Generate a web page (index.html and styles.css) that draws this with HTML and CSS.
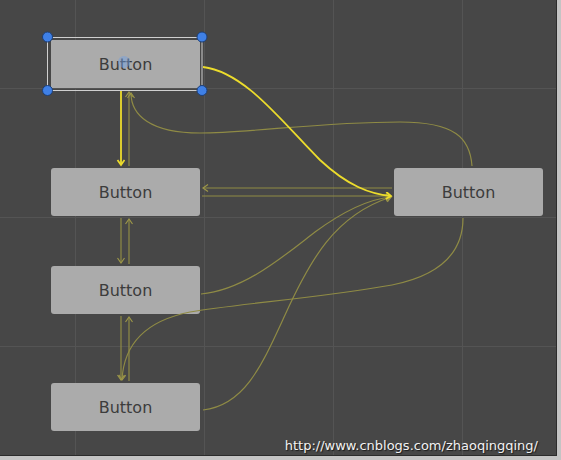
FILE: index.html
```html
<!DOCTYPE html>
<html lang="en">
<head>
  <meta charset="UTF-8" />
  <title>Navigation</title>
  <link rel="stylesheet" href="styles.css">
</head>
<body>
  <div class="shot">
    <div class="canvas">
      <div class="node n1">Button</div>
      <div class="node n2">Button</div>
      <div class="node n3">Button</div>
      <div class="node n4">Button</div>
      <div class="node n5">Button</div>

      <svg class="links" width="556" height="455" viewBox="0 0 556 455">
        <defs>
          <marker id="tipDim" markerUnits="userSpaceOnUse" markerWidth="10" markerHeight="10" refX="6" refY="4" orient="auto">
            <path d="M1,0.5 L6,4 L1,7.5" fill="none" stroke="#9c9648" stroke-width="1.2"/>
          </marker>
          <marker id="tipLit" markerUnits="userSpaceOnUse" markerWidth="10" markerHeight="10" refX="6" refY="4" orient="auto">
            <path d="M1,0.5 L6,4 L1,7.5" fill="none" stroke="#ecdc2c" stroke-width="1.8"/>
          </marker>
        </defs>

        <g class="dim" marker-end="url(#tipDim)">
          <path d="M129,166 L129,92"/>
          <path d="M472,166 C470,138 455,122 400,122 C320,122 250,133 200,133 C150,133 131,115 131,93"/>
          <path d="M392,188 L203,188"/>
          <path d="M202,196 L391,196"/>
          <path d="M201,294 C245,290 285,255 315,232 C345,210 370,199 391,197"/>
          <path d="M203,410 C245,405 262,365 285,315 C310,260 335,215 391,197"/>
          <path d="M463,218 C463,258 432,277 392,285 C320,298 235,304 190,312 C150,320 124,340 122,380"/>
          <path d="M121,218 L121,263"/>
          <path d="M129,264 L129,219"/>
          <path d="M121,316 L121,380"/>
          <path d="M129,381 L129,317"/>
        </g>

        <g class="lit" marker-end="url(#tipLit)">
          <path d="M203,67 C245,72 282,122 320,160 C348,186 370,194 391,196"/>
          <path d="M121,91 L121,165"/>
        </g>

        <rect class="select" x="47.5" y="37.5" width="154.5" height="53"/>
        <circle class="pivot" cx="124" cy="62" r="6"/>
        <circle class="handle" cx="47.5" cy="37" r="5"/>
        <circle class="handle" cx="202" cy="37" r="5"/>
        <circle class="handle" cx="47.5" cy="90.5" r="5"/>
        <circle class="handle" cx="202" cy="90.5" r="5"/>
      </svg>

      <div class="credit">http://www.cnblogs.com/zhaoqingqing/</div>
    </div>
  </div>
</body>
</html>
```

FILE: styles.css
```css
body {
  margin: 0;
  background: #c4c4c4;
  font-family: "DejaVu Sans", sans-serif;
}
.shot {
  width: 561px;
  height: 460px;
}
.canvas {
  position: relative;
  width: 556px;
  height: 455px;
  border-right: 1px solid #2c2c2c;
  border-bottom: 1px solid #2c2c2c;
  background-color: #474747;
  background-image:
    linear-gradient(to right, #545454 1px, transparent 1px),
    linear-gradient(to bottom, #545454 1px, transparent 1px);
  background-size: 129px 129px;
  background-position: 75px 88px;
  overflow: hidden;
}
.node {
  position: absolute;
  display: flex;
  align-items: center;
  justify-content: center;
  width: 149px;
  height: 48px;
  background: #ababab;
  border-radius: 3px;
  color: #3c3c3c;
  font-size: 16px;
}
.n1 { left: 51px;  top: 40px;  border-radius: 1px; }
.n2 { left: 51px;  top: 168px; }
.n3 { left: 51px;  top: 266px; }
.n4 { left: 51px;  top: 383px; }
.n5 { left: 394px; top: 168px; }

.links {
  position: absolute;
  left: 0;
  top: 0;
}
.links path {
  fill: none;
}
.dim path {
  stroke: #8f8b45;
  stroke-width: 1.2;
}
.lit path {
  stroke: #ecdc2c;
  stroke-width: 1.8;
}
.select {
  fill: none;
  stroke: #cfcfcf;
  stroke-width: 1;
}
.pivot {
  fill: rgba(110, 160, 230, 0.45);
}
.handle {
  fill: #3f80e6;
  stroke: #1c3f78;
  stroke-width: 1;
}
.credit {
  position: absolute;
  right: 18px;
  bottom: 2px;
  color: #f2f2f2;
  font-size: 13px;
  text-shadow: 1px 1px 1px #1a1a1a;
}
```
